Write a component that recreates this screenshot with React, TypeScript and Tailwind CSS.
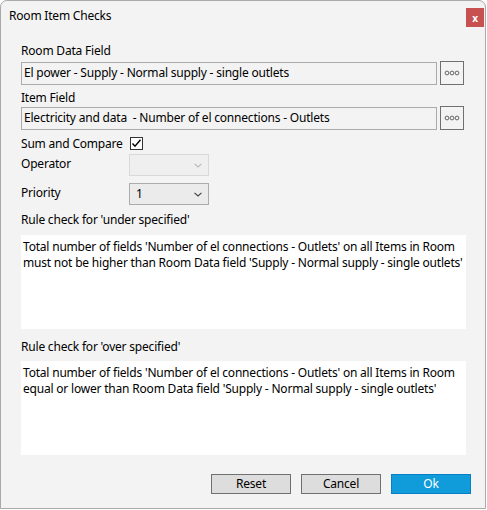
import React from "react";

const font = { fontFamily: '"Noto Sans", "Open Sans", sans-serif', letterSpacing: "-0.2px" };

function Dots() {
  return (
    <svg width="16" height="6" viewBox="0 0 16 6">
      <circle cx="3" cy="3" r="1.9" fill="none" stroke="#666666" strokeWidth="1" />
      <circle cx="8" cy="3" r="1.9" fill="none" stroke="#666666" strokeWidth="1" />
      <circle cx="13" cy="3" r="1.9" fill="none" stroke="#666666" strokeWidth="1" />
    </svg>
  );
}

function Chevron({ color }: { color: string }) {
  return (
    <svg width="8" height="5" viewBox="0 0 8 5">
      <path d="M0.5 0.8 L4 4 L7.5 0.8" fill="none" stroke={color} strokeWidth="1.1" />
    </svg>
  );
}

function FieldRow({ value }: { value: string }) {
  return (
    <div className="flex items-center pr-[2px]">
      <div className="flex-1 h-[23px] border border-[#ababab] bg-[#f3f3f3] pl-[2px] flex items-center text-[12px] text-black whitespace-pre overflow-hidden">
        {value}
      </div>
      <div className="ml-[3px] w-[24px] h-[24px] border border-[#707070] bg-[#f3f3f3] flex items-center justify-center">
        <Dots />
      </div>
    </div>
  );
}

export default function App() {
  return (
    <div className="w-[487px] h-[510px] bg-white" style={font}>
      <div className="w-[486px] h-[509px] border border-[#a9a9a9] rounded-t-[7px] bg-[#f3f3f3] flex flex-col text-[12px] text-black">
        <div className="h-[29px] flex items-start justify-between">
          <div className="pl-[8px] pt-[7px] text-[12px] leading-[16px]">Room Item Checks</div>
          <div className="mt-[7px] mr-[1px] w-[18px] h-[19px] bg-[#c75050] flex items-center justify-center text-white text-[10px] font-bold leading-none">
            x
          </div>
        </div>
        <div className="flex flex-col pl-[20px] pr-[19px]">
          <div className="mt-[13px] leading-[16px]">Room Data Field</div>
          <div className="mt-[2px]">
            <FieldRow value="El power - Supply - Normal supply - single outlets" />
          </div>
          <div className="mt-[5px] leading-[16px]">Item Field</div>
          <div className="mt-[0px]">
            <FieldRow value="Electricity and data  - Number of el connections - Outlets" />
          </div>
          <div className="mt-[5px] h-[16px] flex items-center">
            <span className="w-[109px] leading-[16px] pt-[1px]">Sum and Compare</span>
            <div className="w-[13px] h-[13px] border border-[#333333] bg-white flex items-center justify-center">
              <svg width="11" height="11" viewBox="0 0 11 11">
                <path d="M1.5 5.5 L4 8.3 L9.5 1.8" fill="none" stroke="#000" strokeWidth="1.4" />
              </svg>
            </div>
          </div>
          <div className="mt-[3px] flex items-start h-[22px]">
            <span className="w-[108px] pt-[2px] leading-[16px]">Operator</span>
            <div className="w-[80px] h-[22px] border border-[#d9d9d9] bg-[#efefef] flex items-center justify-end pr-[6px]">
              <Chevron color="#b8b8b8" />
            </div>
          </div>
          <div className="mt-[7px] flex items-start h-[22px]">
            <span className="w-[108px] pt-[2px] leading-[16px]">Priority</span>
            <div className="w-[80px] h-[22px] border border-[#acacac] bg-[#ebebeb] flex items-center justify-between pl-[6px] pr-[6px]">
              <span className="leading-[16px]">1</span>
              <Chevron color="#404040" />
            </div>
          </div>
          <div className="mt-[7px] leading-[16px]">Rule check for 'under specified'</div>
          <div className="mt-[7px] h-[94px] bg-white px-[2px] pt-[4px] leading-[16px]">
            Total number of fields 'Number of el connections - Outlets' on all Items in Room must not be higher than Room Data field 'Supply - Normal supply - single outlets'
          </div>
          <div className="mt-[10px] leading-[16px]">Rule check for 'over specified'</div>
          <div className="mt-[6px] h-[94px] bg-white px-[2px] pt-[4px] leading-[16px]">
            Total number of fields 'Number of el connections - Outlets' on all Items in Room equal or lower than Room Data field 'Supply - Normal supply - single outlets'
          </div>
          <div className="mt-[19px] flex justify-end gap-[10px]">
            <button className="w-[80px] h-[20px] border border-[#707070] bg-[#dddddd] text-[12px] leading-none">Reset</button>
            <button className="w-[80px] h-[20px] border border-[#707070] bg-[#dddddd] text-[12px] leading-none">Cancel</button>
            <button className="w-[80px] h-[20px] border border-[#0a7fc8] bg-[#109bdb] text-white text-[12px] leading-none -mr-[5px]">Ok</button>
          </div>
        </div>
      </div>
    </div>
  );
}
